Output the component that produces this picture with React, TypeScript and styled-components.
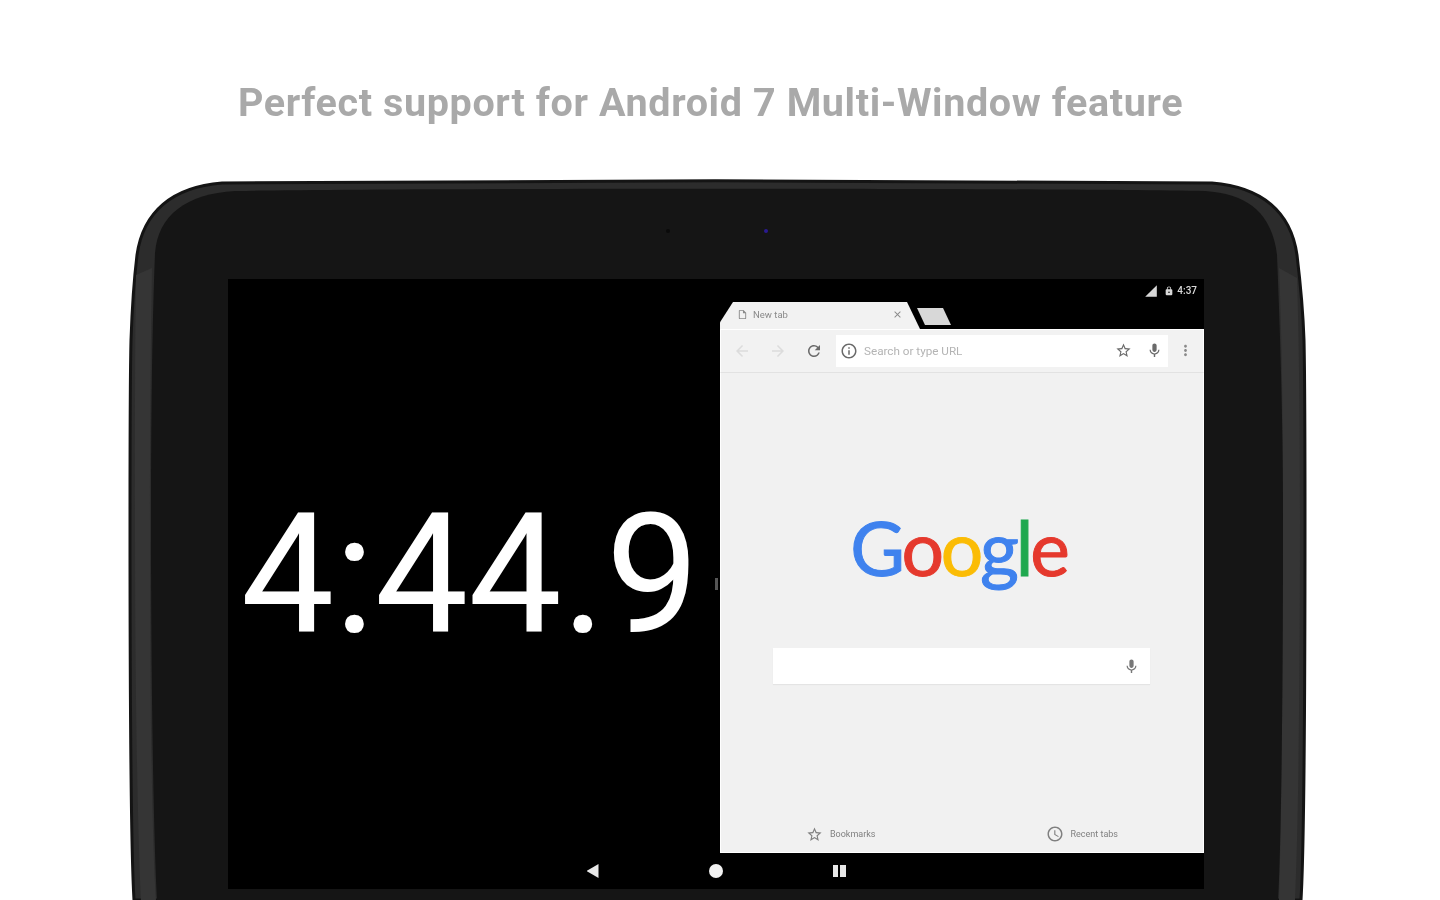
import React from 'react';
import styled, { createGlobalStyle } from 'styled-components';
import {
  MdAccessTime,
  MdArrowBack,
  MdArrowForward,
  MdClose,
  MdInfoOutline,
  MdLock,
  MdMic,
  MdMoreVert,
  MdOutlineInsertDriveFile,
  MdRefresh,
  MdSignalCellular4Bar,
  MdStarBorder,
} from 'react-icons/md';

const GlobalStyle = createGlobalStyle`
  html, body {
    margin: 0;
    padding: 0;
    background: #ffffff;
  }
`;

const Page = styled.div`
  width: 1440px;
  height: 900px;
  overflow: hidden;
  background: #ffffff;
  font-family: Roboto, 'Liberation Sans', sans-serif;
  filter: blur(0.7px);
`;

const Headline = styled.h1`
  margin: 0 0 0 238px;
  padding-top: 80px;
  height: 102px;
  box-sizing: border-box;
  font-size: 39.5px;
  line-height: 46px;
  letter-spacing: 0.62px;
  font-weight: 700;
  color: #a9a9a9;
  white-space: nowrap;
`;

const Tablet = styled.div`
  position: relative;
  box-sizing: border-box;
  width: 1440px;
  height: 724px;
  margin-top: 74px;
  padding-left: 228px;
`;

// the device body is a drawing: its sides bow out slightly, which css radii can't do
const DeviceFrame = styled.svg`
  position: absolute;
  top: 0;
  left: 0;
`;

const DeviceContent = styled.div`
  position: relative;
  width: 976px;
`;

const SensorRow = styled.div`
  display: flex;
  box-sizing: border-box;
  height: 103px;
  justify-content: center;
  gap: 94px;
  padding: 53px 0 0 2px;
`;

const Sensor = styled.div<{ $color: string }>`
  width: 4px;
  height: 4px;
  border-radius: 50%;
  background: ${(p) => p.$color};
`;

const Screen = styled.div`
  display: flex;
  flex-direction: column;
  height: 610px;
  background: #000000;
`;

const StatusBar = styled.div`
  display: flex;
  flex: 0 0 23px;
  align-items: center;
  justify-content: flex-end;
  padding-right: 7px;
  color: #d8d8d8;
  font-size: 10px;
  font-weight: 500;
`;

const StatusLock = styled.div`
  display: flex;
  margin: 0 3px 0 6px;
`;

const Split = styled.div`
  display: flex;
  flex: 1;
`;

const TimerPane = styled.div`
  position: relative;
  display: flex;
  flex: 0 0 492px;
  align-items: center;
  justify-content: center;
`;

const Timer = styled.div`
  padding: 0 8px 2px 0;
  color: #ffffff;
  font-size: 166.5px;
  line-height: 1;
  font-weight: 400;
  white-space: nowrap;
`;

const DragHandle = styled.div`
  position: absolute;
  right: 2px;
  top: 276px;
  width: 3px;
  height: 12px;
  background: #555555;
`;

const ChromeWindow = styled.div`
  display: flex;
  flex: 1;
  flex-direction: column;
`;

const TabStrip = styled.div`
  display: flex;
  flex: 0 0 27px;
  align-items: flex-end;
`;

const ActiveTab = styled.div`
  display: flex;
  align-items: center;
  box-sizing: border-box;
  width: 200px;
  height: 27px;
  padding: 0 17px 2px 17px;
  gap: 5px;
  background: #f2f2f2;
  clip-path: polygon(0 100%, 0 75%, 13px 0, 187px 0, 200px 100%);
  color: #8a8a8a;
  font-size: 9.5px;
`;

const TabTitle = styled.span`
  flex: 1;
`;

const NewTab = styled.div`
  width: 34px;
  height: 17px;
  margin: 0 0 4px -3px;
  background: #d8d8d8;
  clip-path: polygon(0 0, 26px 0, 34px 100%, 8px 100%);
`;

const Toolbar = styled.div`
  display: flex;
  flex: 0 0 44px;
  align-items: center;
  box-sizing: border-box;
  padding-left: 12px;
  background: #f2f2f2;
  border-style: solid;
  border-color: #e2e2e2 #ffffff;
  border-width: 0 1px 1px;
  box-shadow: inset 0 1px 0 #ffffff;
`;

const ToolButton = styled.div<{ $dim?: boolean }>`
  display: flex;
  flex: 0 0 36px;
  align-items: center;
  color: ${(p) => (p.$dim ? '#dcdcdc' : '#6a6a6a')};
`;

const Omnibox = styled.div`
  display: flex;
  align-items: center;
  box-sizing: border-box;
  width: 332px;
  height: 32px;
  margin-left: -5px;
  padding: 0 5px 0 4px;
  gap: 6px;
  background: #ffffff;
  color: #6a6a6a;
`;

const OmniText = styled.span`
  flex: 1;
  color: #b4b4b4;
  font-size: 11.7px;
`;

const OmniIcons = styled.div`
  display: flex;
  align-items: center;
  gap: 14px;
`;

const MenuButton = styled.div`
  display: flex;
  margin-left: 9px;
  color: #8a8a8a;
`;

const NewTabPage = styled.div`
  display: flex;
  flex: 1;
  flex-direction: column;
  align-items: center;
  background: #f1f1f1;
  border-style: solid;
  border-color: #ffffff;
  border-width: 0 1px 1px;
`;

const Logo = styled.div`
  margin: 124px 7px 0 0;
  height: 100px;
  font-family: Lato, Roboto, sans-serif;
  font-size: 75px;
  line-height: 100px;
  letter-spacing: -3.2px;
  font-weight: 400;
  -webkit-text-stroke: 1px;
`;

const LogoLetter = styled.span<{ $color: string }>`
  color: ${(p) => p.$color};
  -webkit-text-stroke-color: ${(p) => p.$color};
`;

const SearchBox = styled.div`
  display: flex;
  align-items: center;
  justify-content: flex-end;
  box-sizing: border-box;
  width: 377px;
  height: 36px;
  margin: 51px 2px 0 0;
  padding-right: 10px;
  background: #ffffff;
  box-shadow: 0 1px 1px #e4e4e4;
  color: #777777;
`;

const Shortcuts = styled.div`
  display: flex;
  justify-content: space-between;
  box-sizing: border-box;
  width: 100%;
  margin-top: auto;
  padding: 0 85px 9px 85px;
`;

const Shortcut = styled.div`
  display: flex;
  align-items: center;
  gap: 7px;
  color: #808080;
  font-size: 9px;
`;

const NavBar = styled.div`
  display: flex;
  flex: 0 0 36px;
  align-items: center;
  justify-content: center;
  gap: 110px;
`;

const NavBack = styled.div`
  width: 12px;
  height: 14px;
  background: #e8e8e8;
  clip-path: polygon(100% 0, 100% 100%, 0 50%);
`;

const NavHome = styled.div`
  width: 14px;
  height: 14px;
  border-radius: 50%;
  background: #f2f2f2;
`;

const NavRecents = styled.div`
  display: flex;
  gap: 2px;
  width: 13px;
  height: 12px;
`;

const RecentsBar = styled.div`
  flex: 1;
  background: #e8e8e8;
`;

const App: React.FC = () => {
  return (
    <Page>
      <GlobalStyle />
      <Headline>Perfect support for Android 7 Multi-Window feature</Headline>
      <Tablet>
        <DeviceFrame width="1440" height="724" viewBox="0 176 1440 724" aria-hidden="true">
          {/* outer shell */}
          <path
            d="M134 900C131 850 130 700 130 520C130 440 130 380 131 340C132 310 134 280 137 255C143 212 172 187 222 183C380 180 1060 180 1212 183C1262 187 1291 212 1297 255C1300 280 1303 310 1304 340C1305 380 1305 440 1305 520C1305 700 1304 850 1301 900Z"
            fill="#2c2c2c"
            stroke="#141414"
            strokeWidth="3"
          />
          {/* side keys */}
          <path
            d="M136 275L152 268C151 330 150 420 150 520C150 700 152 840 156 900L141 900C138 840 135 700 135 520C135 420 135 340 136 275Z"
            fill="#353535"
          />
          <path
            d="M1279 268L1297 278C1299 340 1300 420 1300 520C1300 700 1298 840 1295 900L1279 900C1281 840 1283 700 1283 520C1283 420 1282 340 1279 268Z"
            fill="#353535"
          />
          {/* bezel */}
          <path
            d="M157 900C154 850 151 700 151 520C151 420 152 330 155 253C158 215 186 194 235 191C400 188 1040 188 1205 191C1250 194 1272 215 1277 255C1280 330 1283 420 1283 520C1283 700 1281 850 1278 900Z"
            fill="#151515"
          />
        </DeviceFrame>
        <DeviceContent>
          <SensorRow>
            <Sensor $color="#0a0a0a" />
            <Sensor $color="#2a1a90" />
          </SensorRow>
          <Screen>
            <StatusBar>
              <MdSignalCellular4Bar size={14} />
              <StatusLock>
                <MdLock size={10} />
              </StatusLock>
              <span>4:37</span>
            </StatusBar>
            <Split>
              <TimerPane>
                <Timer>4:44.9</Timer>
                <DragHandle />
              </TimerPane>
              <ChromeWindow>
                <TabStrip>
                  <ActiveTab>
                    <MdOutlineInsertDriveFile size={11} />
                    <TabTitle>New tab</TabTitle>
                    <MdClose size={11} />
                  </ActiveTab>
                  <NewTab />
                </TabStrip>
                <Toolbar>
                  <ToolButton $dim>
                    <MdArrowBack size={18} />
                  </ToolButton>
                  <ToolButton $dim>
                    <MdArrowForward size={18} />
                  </ToolButton>
                  <ToolButton>
                    <MdRefresh size={18} />
                  </ToolButton>
                  <Omnibox>
                    <MdInfoOutline size={18} />
                    <OmniText>Search or type URL</OmniText>
                    <OmniIcons>
                      <MdStarBorder size={17} />
                      <MdMic size={17} />
                    </OmniIcons>
                  </Omnibox>
                  <MenuButton>
                    <MdMoreVert size={17} />
                  </MenuButton>
                </Toolbar>
                <NewTabPage>
                  <Logo>
                    <LogoLetter $color="#3f82ee">G</LogoLetter>
                    <LogoLetter $color="#e5392d">o</LogoLetter>
                    <LogoLetter $color="#fbbc05">o</LogoLetter>
                    <LogoLetter $color="#3f82ee">g</LogoLetter>
                    <LogoLetter $color="#1fa84f">l</LogoLetter>
                    <LogoLetter $color="#e5392d">e</LogoLetter>
                  </Logo>
                  <SearchBox>
                    <MdMic size={17} />
                  </SearchBox>
                  <Shortcuts>
                    <Shortcut>
                      <MdStarBorder size={17} />
                      <span>Bookmarks</span>
                    </Shortcut>
                    <Shortcut>
                      <MdAccessTime size={18} />
                      <span>Recent tabs</span>
                    </Shortcut>
                  </Shortcuts>
                </NewTabPage>
              </ChromeWindow>
            </Split>
            <NavBar>
              <NavBack />
              <NavHome />
              <NavRecents>
                <RecentsBar />
                <RecentsBar />
              </NavRecents>
            </NavBar>
          </Screen>
        </DeviceContent>
      </Tablet>
    </Page>
  );
};

export default App;
